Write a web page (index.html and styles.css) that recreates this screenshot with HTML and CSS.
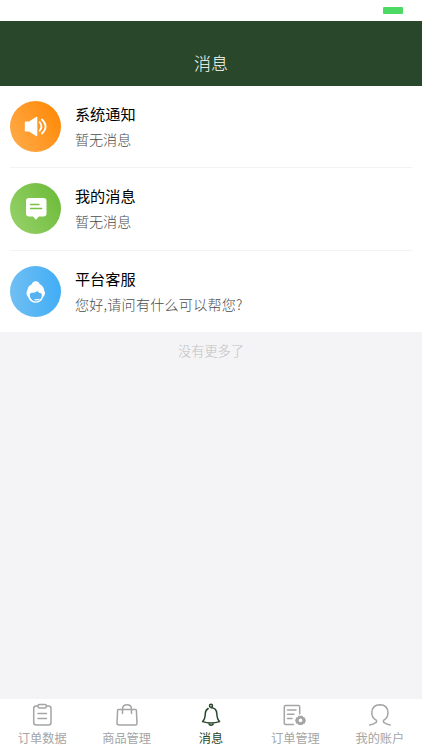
FILE: index.html
```html
<!DOCTYPE html>
<html lang="zh-CN">
<head>
<meta charset="utf-8">
<title>消息</title>
<link rel="stylesheet" href="styles.css">
</head>
<body>
<div class="status"><span class="battery"></span></div>
<header class="header"><h1>消息</h1></header>
<main class="list">
  <section class="item">
    <div class="avatar orange">
      <svg viewBox="0 0 51 51"><path d="M15.500 20.500h3.500l7-4.600q1.300-.8 1.300.8v17.600q0 1.600-1.300.8l-7-4.600h-3.500q-.7 0-.7-.8v-8.400q0-.8.7-.8Z" fill="#fff"/><path d="M29.700 21.300q3.400 4.200 0 8.400M32 18.500q7.200 7 0 14" fill="none" stroke="#fff" stroke-width="1.800" stroke-linecap="round"/></svg>
    </div>
    <div class="text"><h2>系统通知</h2><p>暂无消息</p></div>
  </section>
  <section class="item">
    <div class="avatar green">
      <svg viewBox="0 0 51 51"><path d="M19 15h14.500q3 0 3 3v12.500q0 3-3 3h-4.700l-2.900 3.300-2.900-3.300H19q-3 0-3-3V18q0-3 3-3Z" fill="#fff"/><path d="M20.500 21.500h8.500M20.500 25.500h11.200" fill="none" stroke="#79c143" stroke-width="1.300" stroke-linecap="round"/></svg>
    </div>
    <div class="text"><h2>我的消息</h2><p>暂无消息</p></div>
  </section>
  <section class="item">
    <div class="avatar blue">
      <svg viewBox="0 0 51 51"><path d="M18 31Q15.300 27.500 17.300 24.500Q18 19.500 21.800 18.200Q22.500 15.300 25.700 15.300Q28.800 15.300 29.700 18.200Q33.700 20 34.200 24.500Q36.200 27.500 33.300 31Q31 36.800 25.700 36.800Q20.500 36.800 18 31Z" fill="#fff"/><path d="M19.800 28.500Q20 26.500 22.500 26.800Q25.500 27 27.300 25Q28.800 27 31.500 27.500Q32.500 30 31 32.500Q29 35.400 25.500 35.400Q19.800 34.500 19.800 28.500Z" fill="#57b2f2"/><path d="M25 33.600q2 .6 4-.3" fill="none" stroke="#fff" stroke-width="1.100" stroke-linecap="round"/></svg>
    </div>
    <div class="text"><h2>平台客服</h2><p class="greeting">您好,请问有什么可以帮您?</p></div>
  </section>
</main>
<p class="end">没有更多了</p>
<nav class="tabs">
  <div class="tab">
    <svg viewBox="0 0 24 24"><rect x="3.700" y="3" width="17.300" height="19" rx="2.500"/><rect class="cover" x="8" y="1.500" width="8.400" height="3.500" rx="1.500"/><path d="M8 10.500h8.500M8 15.500h8.500"/></svg>
    <span>订单数据</span>
  </div>
  <div class="tab">
    <svg viewBox="0 0 24 24"><path d="M3.500 6.500h17q.8 0 .9.800l.600 13.200q0 1.500-1.500 1.500h-16Q2 22 2 20.500l.600-13.200q.1-.8.900-.8ZM7.500 10.500V6.200q0-4.400 4.500-4.400t4.500 4.400v4.300"/></svg>
    <span>商品管理</span>
  </div>
  <div class="tab active">
    <svg viewBox="0 0 24 24"><path d="M9.200 5.500Q6.500 7 6.300 10.500Q6.200 16 3.600 18.600Q12 21.500 20.600 18.600Q18 16 17.800 10.500Q17.500 4.800 12.100 4.700"/><circle cx="12" cy="2.700" r="1.500"/><path d="M10 21q2 2.700 4.200 0"/></svg>
    <span>消息</span>
  </div>
  <div class="tab">
    <svg viewBox="0 0 24 24"><path d="M10.500 21.500h-8q-1.200 0-1.200-1.200V3.700q0-1.200 1.200-1.200h13q1.200 0 1.200 1.200v7M4.500 7h8.500M4.500 11.200h6.500M4.500 15.400h4.500"/><path class="gear" d="M15.800 13.600h3.400l.6 1.200 1.400.1.900 2.500-.9 2.500-1.400.1-.6 1.200h-3.400l-.6-1.200-1.400-.1-.9-2.500.9-2.500 1.400-.1Z"/><circle class="hole" cx="17.500" cy="17.400" r="1.800"/></svg>
    <span>订单管理</span>
  </div>
  <div class="tab">
    <svg viewBox="0 0 24 24"><path d="M1.800 22q4.200-.9 6.700-2.900v-1.700Q3.800 15 3.800 9.800Q4 1.800 12 1.700Q19.800 1.800 20 9.800Q20 15 15.500 17.400v1.700q2.500 2 6.500 2.900"/></svg>
    <span>我的账户</span>
  </div>
</nav>
</body>
</html>
```
FILE: styles.css
```css
* { box-sizing: border-box; margin: 0; padding: 0; }
body {
  display: flex;
  flex-direction: column;
  height: 750px;
  overflow: hidden;
  background: #f4f4f6;
  font-family: "Noto Sans CJK SC", sans-serif;
}
h1, h2 { font-weight: 400; }
.status {
  display: flex;
  justify-content: flex-end;
  height: 21px;
  padding: 7px 19px 0 0;
  background: #fff;
}
.battery { width: 20px; height: 7px; border-radius: 1px; background: #4cd964; }
.header { height: 65px; padding-top: 29px; background: #29472b; color: #fff; text-align: center; }
.header h1 { font-size: 17px; line-height: 25px; font-weight: 300; }
.list { height: 246px; background: #fff; }
.item {
  display: flex;
  height: 82px;
  margin: 0 10px;
  padding-top: 15px;
  border-bottom: 1px solid #f3f3f3;
}
.item:nth-child(2) { height: 83px; }
.item:last-child { height: 81px; border: 0; }
.avatar { width: 51px; height: 51px; margin-left: .400px; border-radius: 50%; }
.avatar svg { display: block; width: 51px; height: 51px; }
.orange { background: linear-gradient(60deg, #ffad4e, #ff8500); }
.green { background: linear-gradient(60deg, #99d36d, #69b935); }
.blue { background: linear-gradient(90deg, #70bff3, #41adf6); }
.text { margin-left: 13.500px; }
.text h2 { height: 26px; font-size: 15.200px; line-height: 25px; color: #000; }
.text p { font-size: 14.100px; line-height: 25px; color: #4c4c4c; font-weight: 300; white-space: nowrap; }
.text .greeting { letter-spacing: .220px; }
.end { padding-top: 9px; font-size: 13.200px; line-height: 20px; text-align: center; color: #c0c0c2; font-weight: 300; }
.tabs { display: flex; height: 51px; margin-top: auto; background: #fff; }
.tab {
  display: flex;
  flex: 1;
  flex-direction: column;
  align-items: center;
  padding-top: 4px;
  color: #a5a5a5;
}
.tab svg { width: 24px; height: 24px; fill: none; stroke: currentColor; stroke-width: 1.500; stroke-linecap: round; stroke-linejoin: round; }
.tab span { font-size: 12.200px; line-height: 20px; margin-top: 1px; }
.tab .cover { fill: #fff; }
.tab .gear { fill: currentColor; }
.tab .hole { fill: #fff; stroke: none; }
.active { color: #29472b; }
```
